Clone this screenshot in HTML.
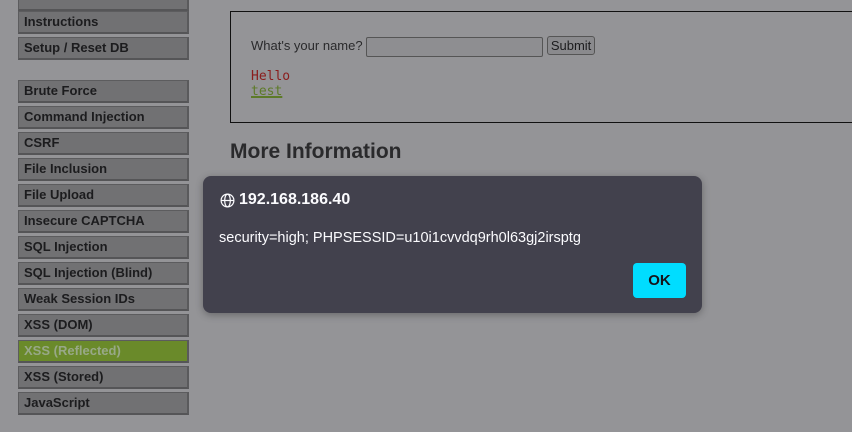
<!DOCTYPE html>
<html><head><style>
body{margin:0;width:852px;height:432px;overflow:hidden;background:#949497;font-family:"Liberation Sans",sans-serif;position:relative}
.m{position:absolute;left:18px;height:20px;background:#717173;border:1px solid #5c5c5e;border-bottom:2px solid #555557;border-right:2px solid #5a5a5c;font-weight:bold;font-size:13px;color:#1c1c1e;line-height:20px;padding-left:5px;width:163px}
.m.a{background:#6a8a2a;color:#98a888}
.box{position:absolute;left:230px;top:11px;width:640px;height:110px;border:1px solid #111;}
.dlg{position:absolute;left:203px;top:176px;width:499px;height:137px;background:#42414d;border-radius:8px;box-shadow:0 2px 8px rgba(0,0,0,.3);color:#fbfbfe;font-family:"Liberation Sans",sans-serif}
</style></head><body>
<div class="m" style="top:-12px"></div>
<div class="m" style="top:11px">Instructions</div>
<div class="m" style="top:37px">Setup / Reset DB</div>
<div class="m" style="top:80px">Brute Force</div>
<div class="m" style="top:106px">Command Injection</div>
<div class="m" style="top:132px">CSRF</div>
<div class="m" style="top:158px">File Inclusion</div>
<div class="m" style="top:184px">File Upload</div>
<div class="m" style="top:210px">Insecure CAPTCHA</div>
<div class="m" style="top:236px">SQL Injection</div>
<div class="m" style="top:262px">SQL Injection (Blind)</div>
<div class="m" style="top:288px">Weak Session IDs</div>
<div class="m" style="top:314px">XSS (DOM)</div>
<div class="m a" style="top:340px">XSS (Reflected)</div>
<div class="m" style="top:366px">XSS (Stored)</div>
<div class="m" style="top:392px">JavaScript</div>
<div class="box">
<div style="position:absolute;left:20px;top:24px;font-size:13px;color:#2a2a2c">What's your name? <span style="display:inline-block;width:175px;height:18px;border:1px solid #555;border-radius:2px;vertical-align:middle;background:#8e8e91"></span> <span style="display:inline-block;border:1px solid #555;border-radius:3px;padding:1px 3px;background:#8a8a8d;color:#1c1c1e">Submit</span></div>
<div style="position:absolute;left:20px;top:57px;font-family:'DejaVu Sans Mono','Liberation Mono',monospace;font-size:13px;line-height:15px"><div style="color:#8a1c1c">Hello</div><div style="color:#5d7a28;text-decoration:underline;text-decoration-thickness:2px">test</div></div>
</div>
<div style="position:absolute;left:230px;top:140px;font-size:21px;font-weight:bold;color:#2a2a2c">More Information</div>
<div class="dlg">
<svg style="position:absolute;left:17px;top:17px" width="15" height="15" viewBox="0 0 16 16" fill="none" stroke="#fbfbfe" stroke-width="1.3"><circle cx="8" cy="8" r="6.8"/><ellipse cx="8" cy="8" rx="3" ry="6.8"/><path d="M1.2 8h13.6"/></svg>
<div style="position:absolute;left:36px;top:15px;font-size:16px;font-weight:bold">192.168.186.40</div>
<div style="position:absolute;left:16px;top:54px;font-size:14.5px">security=high; PHPSESSID=u10i1cvvdq9rh0l63gj2irsptg</div>
<div style="position:absolute;left:430px;top:87px;width:53px;height:35px;background:#00ddff;border-radius:4px;color:#15141a;font-weight:bold;font-size:15px;text-align:center;line-height:35px">OK</div>
</div>
</body></html>
